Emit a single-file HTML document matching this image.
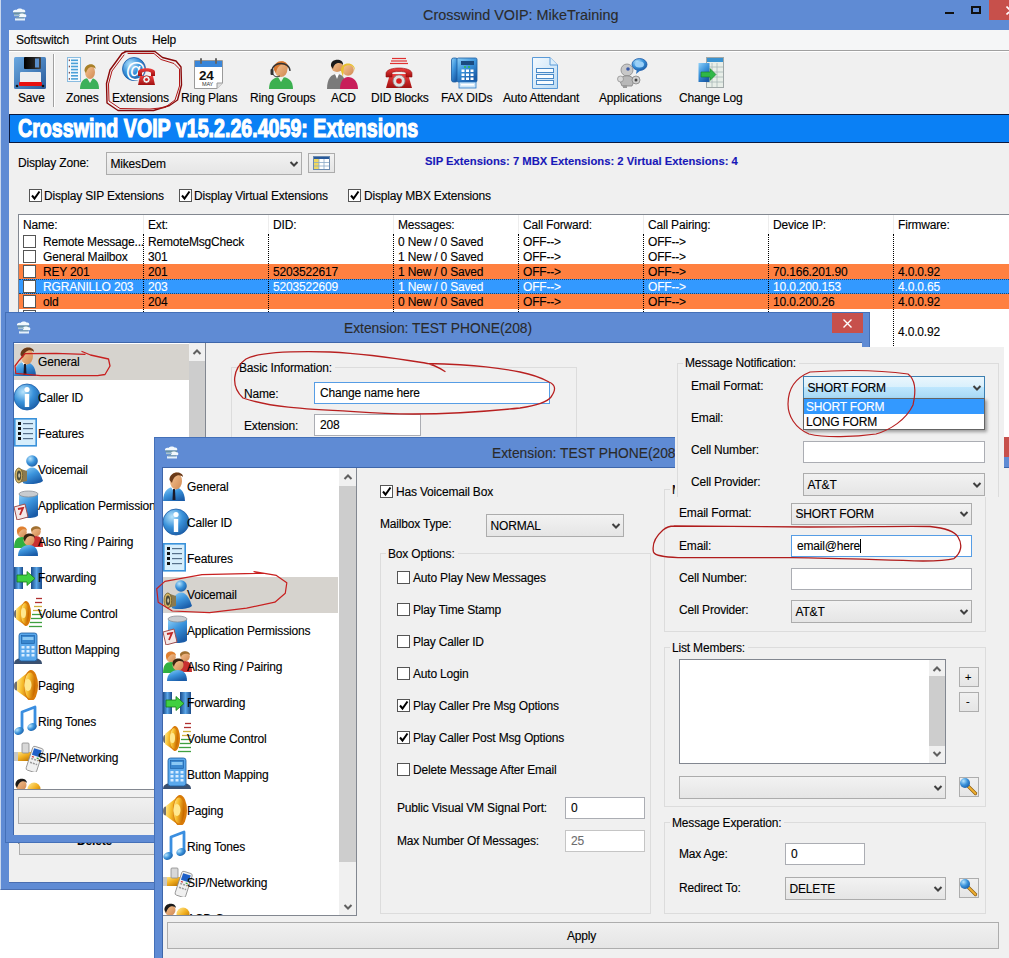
<!DOCTYPE html><html><head><meta charset="utf-8"><style>
*{margin:0;padding:0;box-sizing:border-box}
body{width:1009px;height:958px;position:relative;overflow:hidden;background:#fff;font-family:"Liberation Sans",sans-serif;font-size:12px;color:#000;letter-spacing:-0.18px;-webkit-text-stroke:0.12px currentColor}
.a{position:absolute}
.t{position:absolute;white-space:nowrap;line-height:16px}
.cb{border:1px solid #555;background:#fff}
.win{position:absolute;background:#5F8BD4;border:1px solid #4470B8;overflow:hidden}
.dot{border-left:1px dotted #000}
</style></head><body>

<div class="a" style="left:0;top:0;width:1009px;height:890px;background:#5F8BD4;border-left:1px solid #C8D7EE;border-bottom:1px solid #4A6EB0"></div>
<div class="a" style="left:9px;top:30px;width:1000px;height:853px;background:#F0F0F0;border-bottom:1px solid #4A6EB0"></div>
<div class="a" style="left:9px;top:30px;width:1000px;height:20px;background:#F5F6F7"></div>
<div class="a" style="left:9px;top:50px;width:1000px;height:1px;background:#A0A0A0"></div>
<div class="a" style="left:9px;top:51px;width:1000px;height:1px;background:#FFFFFF"></div>
<div class="t" style="left:16px;top:32.2px;font-size:12px;color:#000;font-weight:normal;">Softswitch</div>
<div class="t" style="left:85px;top:32.2px;font-size:12px;color:#000;font-weight:normal;">Print Outs</div>
<div class="t" style="left:152px;top:32.2px;font-size:12px;color:#000;font-weight:normal;">Help</div>
<div class="t" style="left:423px;top:7.3px;font-size:14.4px;color:#2A2A2A;font-weight:normal;letter-spacing:0">Crosswind VOIP: MikeTraining</div>
<div class="a" style="left:945px;top:12px;width:9px;height:2px;background:#111"></div>
<div class="a" style="left:971px;top:6px;width:10px;height:8px;border:2px solid #111;border-top-width:2px"></div>
<div class="a" style="left:989px;top:0px;width:20px;height:20px;background:#C7504B"></div>
<svg class="a" style="left:1006px;top:6px" width="6" height="9"><path d="M0.5 0.5 L6 6" stroke="#fff" stroke-width="1.6"/><path d="M0.5 8.5 L3 6" stroke="#fff" stroke-width="1.6"/></svg>
<div class="t" style="left:18px;top:90.2px;font-size:12px;color:#000;font-weight:normal;">Save</div>
<div class="t" style="left:66px;top:90.2px;font-size:12px;color:#000;font-weight:normal;">Zones</div>
<div class="t" style="left:112px;top:90.2px;font-size:12px;color:#000;font-weight:normal;">Extensions</div>
<div class="t" style="left:181px;top:90.2px;font-size:12px;color:#000;font-weight:normal;">Ring Plans</div>
<div class="t" style="left:250px;top:90.2px;font-size:12px;color:#000;font-weight:normal;">Ring Groups</div>
<div class="t" style="left:331px;top:90.2px;font-size:12px;color:#000;font-weight:normal;">ACD</div>
<div class="t" style="left:371px;top:90.2px;font-size:12px;color:#000;font-weight:normal;">DID Blocks</div>
<div class="t" style="left:441px;top:90.2px;font-size:12px;color:#000;font-weight:normal;">FAX DIDs</div>
<div class="t" style="left:503px;top:90.2px;font-size:12px;color:#000;font-weight:normal;">Auto Attendant</div>
<div class="t" style="left:599px;top:90.2px;font-size:12px;color:#000;font-weight:normal;">Applications</div>
<div class="t" style="left:679px;top:90.2px;font-size:12px;color:#000;font-weight:normal;">Change Log</div>
<div class="a" style="left:53px;top:54px;width:1px;height:53px;background:#A0A0A0"></div>
<div class="a" style="left:54px;top:54px;width:1px;height:53px;background:#FFFFFF"></div>
<div class="a" style="left:9px;top:114px;width:1000px;height:29px;background:#0A80F5;border:1px solid #0A1A40;border-right:none"></div>
<div class="t" style="left:18px;top:112px;font-size:26px;line-height:32px;font-weight:bold;color:#fff;transform:scaleX(0.755);transform-origin:0 0;letter-spacing:0px;-webkit-text-stroke:1.2px #fff">Crosswind VOIP v15.2.26.4059: Extensions</div>
<div class="t" style="left:18px;top:155.2px;font-size:12px;color:#000;font-weight:normal;">Display Zone:</div>
<div class="a" style="left:106px;top:152px;width:196px;height:23px;border:1px solid #ACACAC;background:linear-gradient(#F2F2F2,#E5E5E5)"></div>
<div class="t" style="left:110.5px;top:155.7px;font-size:12px;color:#000;font-weight:normal;">MikesDem</div>
<svg class="a" style="left:288.5px;top:159.5px" width="10" height="8"><path d="M1.5 2 L5 5.5 L8.5 2" stroke="#404040" stroke-width="2" fill="none"/></svg>
<div class="a" style="left:308px;top:153px;width:27px;height:20px;border:1px solid #ACACAC;background:linear-gradient(#F2F2F2,#E5E5E5)"></div>
<svg class="a" style="left:313px;top:156px" width="17" height="14"><rect x="0.5" y="0.5" width="16" height="13" fill="#fff" stroke="#6A8AB0"/><rect x="1" y="1" width="15" height="2" fill="#2A5A9A"/><rect x="1" y="3" width="5" height="10" fill="#F0D860"/><g stroke="#8AAAC8" stroke-width="0.8"><line x1="6" y1="3" x2="6" y2="13"/><line x1="11" y1="3" x2="11" y2="13"/><line x1="1" y1="6.5" x2="16" y2="6.5"/><line x1="1" y1="10" x2="16" y2="10"/></g></svg>
<div class="t" style="left:425px;top:153.2px;font-size:11.25px;color:#1818B8;font-weight:bold;letter-spacing:0">SIP Extensions: 7 MBX Extensions: 2 Virtual Extensions: 4</div>
<div class="a cb" style="left:29px;top:189px;width:13px;height:13px;"><svg width="11" height="11" style="position:absolute;left:0;top:0"><path d="M2 5.5 L4.5 8.5 L9.5 1.5" stroke="#000" stroke-width="2" fill="none"/></svg></div>
<div class="t" style="left:44px;top:187.7px;font-size:12px;color:#000;font-weight:normal;">Display SIP Extensions</div>
<div class="a cb" style="left:179px;top:189px;width:13px;height:13px;"><svg width="11" height="11" style="position:absolute;left:0;top:0"><path d="M2 5.5 L4.5 8.5 L9.5 1.5" stroke="#000" stroke-width="2" fill="none"/></svg></div>
<div class="t" style="left:194px;top:187.7px;font-size:12px;color:#000;font-weight:normal;">Display Virtual Extensions</div>
<div class="a cb" style="left:348px;top:189px;width:13px;height:13px;"><svg width="11" height="11" style="position:absolute;left:0;top:0"><path d="M2 5.5 L4.5 8.5 L9.5 1.5" stroke="#000" stroke-width="2" fill="none"/></svg></div>
<div class="t" style="left:364px;top:187.7px;font-size:12px;color:#000;font-weight:normal;">Display MBX Extensions</div>
<div class="a" style="left:18px;top:214px;width:991px;height:630px;background:#fff;border-top:1px solid #828790;border-left:1px solid #828790"></div>
<div class="t" style="left:23px;top:217.2px;font-size:12px;color:#000;font-weight:normal;">Name:</div>
<div class="t" style="left:148px;top:217.2px;font-size:12px;color:#000;font-weight:normal;">Ext:</div>
<div class="t" style="left:273px;top:217.2px;font-size:12px;color:#000;font-weight:normal;">DID:</div>
<div class="t" style="left:398px;top:217.2px;font-size:12px;color:#000;font-weight:normal;">Messages:</div>
<div class="t" style="left:523px;top:217.2px;font-size:12px;color:#000;font-weight:normal;">Call Forward:</div>
<div class="t" style="left:648px;top:217.2px;font-size:12px;color:#000;font-weight:normal;">Call Pairing:</div>
<div class="t" style="left:773px;top:217.2px;font-size:12px;color:#000;font-weight:normal;">Device IP:</div>
<div class="t" style="left:898px;top:217.2px;font-size:12px;color:#000;font-weight:normal;">Firmware:</div>
<div class="a" style="left:143px;top:215px;width:1px;height:19px;background:#EDEDED"></div>
<div class="a" style="left:268px;top:215px;width:1px;height:19px;background:#EDEDED"></div>
<div class="a" style="left:393px;top:215px;width:1px;height:19px;background:#EDEDED"></div>
<div class="a" style="left:518px;top:215px;width:1px;height:19px;background:#EDEDED"></div>
<div class="a" style="left:643px;top:215px;width:1px;height:19px;background:#EDEDED"></div>
<div class="a" style="left:768px;top:215px;width:1px;height:19px;background:#EDEDED"></div>
<div class="a" style="left:893px;top:215px;width:1px;height:19px;background:#EDEDED"></div>
<div class="a cb" style="left:23px;top:235px;width:13px;height:13px;"></div>
<div class="t" style="left:43px;top:233.7px;font-size:12px;color:#000;font-weight:normal;">Remote Message...</div>
<div class="t" style="left:148px;top:233.7px;font-size:12px;color:#000;font-weight:normal;">RemoteMsgCheck</div>
<div class="t" style="left:398px;top:233.7px;font-size:12px;color:#000;font-weight:normal;">0 New / 0 Saved</div>
<div class="t" style="left:523px;top:233.7px;font-size:12px;color:#000;font-weight:normal;">OFF--></div>
<div class="t" style="left:648px;top:233.7px;font-size:12px;color:#000;font-weight:normal;">OFF--></div>
<div class="a cb" style="left:23px;top:250px;width:13px;height:13px;"></div>
<div class="t" style="left:43px;top:248.7px;font-size:12px;color:#000;font-weight:normal;">General Mailbox</div>
<div class="t" style="left:148px;top:248.7px;font-size:12px;color:#000;font-weight:normal;">301</div>
<div class="t" style="left:398px;top:248.7px;font-size:12px;color:#000;font-weight:normal;">1 New / 0 Saved</div>
<div class="t" style="left:523px;top:248.7px;font-size:12px;color:#000;font-weight:normal;">OFF--></div>
<div class="t" style="left:648px;top:248.7px;font-size:12px;color:#000;font-weight:normal;">OFF--></div>
<div class="a" style="left:19px;top:264px;width:990px;height:15px;background:#FF8040"></div>
<div class="a cb" style="left:23px;top:265px;width:13px;height:13px;"></div>
<div class="t" style="left:43px;top:263.7px;font-size:12px;color:#000;font-weight:normal;">REY 201</div>
<div class="t" style="left:148px;top:263.7px;font-size:12px;color:#000;font-weight:normal;">201</div>
<div class="t" style="left:273px;top:263.7px;font-size:12px;color:#000;font-weight:normal;">5203522617</div>
<div class="t" style="left:398px;top:263.7px;font-size:12px;color:#000;font-weight:normal;">1 New / 0 Saved</div>
<div class="t" style="left:523px;top:263.7px;font-size:12px;color:#000;font-weight:normal;">OFF--></div>
<div class="t" style="left:648px;top:263.7px;font-size:12px;color:#000;font-weight:normal;">OFF--></div>
<div class="t" style="left:773px;top:263.7px;font-size:12px;color:#000;font-weight:normal;">70.166.201.90</div>
<div class="t" style="left:898px;top:263.7px;font-size:12px;color:#000;font-weight:normal;">4.0.0.92</div>
<div class="a" style="left:19px;top:279px;width:990px;height:15px;background:#3399FF;border-top:1px dotted rgba(0,0,0,0.55);border-bottom:1px dotted rgba(0,0,0,0.55)"></div>
<div class="a cb" style="left:23px;top:280px;width:13px;height:13px;"></div>
<div class="t" style="left:43px;top:278.7px;font-size:12px;color:#fff;font-weight:normal;">RGRANILLO 203</div>
<div class="t" style="left:148px;top:278.7px;font-size:12px;color:#fff;font-weight:normal;">203</div>
<div class="t" style="left:273px;top:278.7px;font-size:12px;color:#fff;font-weight:normal;">5203522609</div>
<div class="t" style="left:398px;top:278.7px;font-size:12px;color:#fff;font-weight:normal;">1 New / 0 Saved</div>
<div class="t" style="left:523px;top:278.7px;font-size:12px;color:#fff;font-weight:normal;">OFF--></div>
<div class="t" style="left:648px;top:278.7px;font-size:12px;color:#fff;font-weight:normal;">OFF--></div>
<div class="t" style="left:773px;top:278.7px;font-size:12px;color:#fff;font-weight:normal;">10.0.200.153</div>
<div class="t" style="left:898px;top:278.7px;font-size:12px;color:#fff;font-weight:normal;">4.0.0.65</div>
<div class="a" style="left:19px;top:294px;width:990px;height:15px;background:#FF8040"></div>
<div class="a cb" style="left:23px;top:295px;width:13px;height:13px;"></div>
<div class="t" style="left:43px;top:293.7px;font-size:12px;color:#000;font-weight:normal;">old</div>
<div class="t" style="left:148px;top:293.7px;font-size:12px;color:#000;font-weight:normal;">204</div>
<div class="t" style="left:398px;top:293.7px;font-size:12px;color:#000;font-weight:normal;">0 New / 0 Saved</div>
<div class="t" style="left:523px;top:293.7px;font-size:12px;color:#000;font-weight:normal;">OFF--></div>
<div class="t" style="left:648px;top:293.7px;font-size:12px;color:#000;font-weight:normal;">OFF--></div>
<div class="t" style="left:773px;top:293.7px;font-size:12px;color:#000;font-weight:normal;">10.0.200.26</div>
<div class="t" style="left:898px;top:293.7px;font-size:12px;color:#000;font-weight:normal;">4.0.0.92</div>
<div class="a cb" style="left:23px;top:310px;width:13px;height:13px;"></div>
<div class="a cb" style="left:23px;top:325px;width:13px;height:13px;"></div>
<div class="t" style="left:898px;top:323.7px;font-size:12px;color:#000;font-weight:normal;">4.0.0.92</div>
<div class="a" style="left:143px;top:234px;width:1px;height:600px;border-left:1px dotted #000"></div>
<div class="a" style="left:268px;top:234px;width:1px;height:600px;border-left:1px dotted #000"></div>
<div class="a" style="left:393px;top:234px;width:1px;height:600px;border-left:1px dotted #000"></div>
<div class="a" style="left:518px;top:234px;width:1px;height:600px;border-left:1px dotted #000"></div>
<div class="a" style="left:643px;top:234px;width:1px;height:600px;border-left:1px dotted #000"></div>
<div class="a" style="left:768px;top:234px;width:1px;height:600px;border-left:1px dotted #000"></div>
<div class="a" style="left:893px;top:234px;width:1px;height:600px;border-left:1px dotted #000"></div>
<div class="a" style="left:19px;top:830px;width:990px;height:25px;border:1px solid #ADADAD;background:linear-gradient(#F0F0F0,#E5E5E5)"></div>
<div class="t" style="left:77px;top:832.7px;font-size:12px;color:#000;font-weight:bold;">Delete</div>
<svg width="0" height="0" style="position:absolute">
<defs>
<linearGradient id="gBlue" x1="0" y1="0" x2="0.6" y2="1"><stop offset="0" stop-color="#8FD0F8"/><stop offset="0.5" stop-color="#3C94DC"/><stop offset="1" stop-color="#1A5CA8"/></linearGradient>
<radialGradient id="gBall" cx="0.35" cy="0.3" r="0.8"><stop offset="0" stop-color="#B8E4FC"/><stop offset="0.5" stop-color="#3A92DA"/><stop offset="1" stop-color="#1858A0"/></radialGradient>
<linearGradient id="gGold" x1="0" y1="0" x2="1" y2="1"><stop offset="0" stop-color="#FFF0A0"/><stop offset="0.5" stop-color="#F2B020"/><stop offset="1" stop-color="#B06800"/></linearGradient>
<linearGradient id="gHorn" x1="0" y1="0" x2="1" y2="0.3"><stop offset="0" stop-color="#FFF0A0"/><stop offset="0.45" stop-color="#F8C030"/><stop offset="1" stop-color="#C86A00"/></linearGradient><linearGradient id="gSkin" x1="0" y1="0" x2="1" y2="1"><stop offset="0" stop-color="#F8C898"/><stop offset="1" stop-color="#D08850"/></linearGradient>
<linearGradient id="gBar" x1="0" y1="0" x2="1" y2="0"><stop offset="0" stop-color="#1A4A88"/><stop offset="0.5" stop-color="#5AA6E8"/><stop offset="1" stop-color="#1A4A88"/></linearGradient>
<linearGradient id="gRed" x1="0" y1="0" x2="0" y2="1"><stop offset="0" stop-color="#F04040"/><stop offset="1" stop-color="#A01010"/></linearGradient>
<symbol id="i-general" viewBox="0 0 32 32"><path d="M0 33 C0 22 5 18 11 18 C17 18 22 22 22 33Z" fill="url(#gBlue)"/><path d="M8 18 L11 23 L14 18Z" fill="#fff"/><path d="M10 20 L9.5 31 L12.5 31 L12 20Z" fill="#1A1A2A"/><ellipse cx="13" cy="12" rx="6" ry="8.5" fill="url(#gSkin)"/><path d="M6.5 11 C6 2 20 1 20 8 C17 5 11 5 9 14Z" fill="#6A3A18"/></symbol>
<symbol id="i-callerid" viewBox="0 0 32 32"><circle cx="13" cy="17" r="13" fill="url(#gBall)" stroke="#1A5CA8" stroke-width="0.8"/><circle cx="13" cy="9.5" r="2.6" fill="#fff"/><rect x="10.8" y="14" width="4.4" height="13" fill="#fff"/></symbol>
<symbol id="i-features" viewBox="0 0 32 32"><rect x="0.8" y="2.8" width="21.4" height="27" fill="#D6EEFC" stroke="#3A92DA" stroke-width="1.6"/><g fill="#111"><rect x="4" y="6" width="3" height="3"/><rect x="4" y="11" width="3" height="3"/><rect x="4" y="16" width="3" height="3"/><rect x="4" y="21" width="3" height="3"/></g><g fill="#55708A"><rect x="9" y="7" width="10" height="1.2"/><rect x="9" y="12" width="10" height="1.2"/><rect x="9" y="17" width="10" height="1.2"/><rect x="9" y="22" width="10" height="1.2"/></g></symbol>
<symbol id="i-voicemail" viewBox="0 0 32 32"><path d="M9 31 C8 24 12 15.5 18 15.5 C24 15.5 27 23 29 29 C26 32 13 33 9 31Z" fill="url(#gBlue)"/><circle cx="18" cy="9" r="5.8" fill="url(#gBall)"/><path d="M4 16 L13 19 L13 29 L4 31Z" fill="#8A7A50"/><ellipse cx="4.8" cy="23.5" rx="3.8" ry="7.5" fill="#D8B868" stroke="#6A5A28" stroke-width="0.8"/><ellipse cx="5" cy="23.5" rx="2.2" ry="5" fill="#4A4A3A"/><ellipse cx="5.2" cy="23.5" rx="1" ry="2.2" fill="#C8C0A0"/></symbol>
<symbol id="i-app" viewBox="0 0 32 32"><path d="M5 6 L5 27 C5 31 24 31 24 27 L24 6Z" fill="url(#gBlue)"/><ellipse cx="14.5" cy="6" rx="9.5" ry="3" fill="#C8CCD0" stroke="#8A9098" stroke-width="0.8"/><path d="M0 19 L11 16 L14 29 L3 32Z" fill="#F4E8E8" stroke="#A05050" stroke-width="1"/><path d="M4 21 L9 20 L6 27" stroke="#C02828" stroke-width="1.8" fill="none"/></symbol>
<symbol id="i-alsoring" viewBox="0 0 32 32"><circle cx="22" cy="7.5" r="4.8" fill="url(#gSkin)"/><path d="M17 6 C17 1 27 1 27 6 C25 4 19 4 18 8Z" fill="#A07030"/><path d="M15 23 C15 15 18 12 22 12 C26 12 29 15 29 23Z" fill="#C83030"/><circle cx="8" cy="8.5" r="4.8" fill="url(#gSkin)"/><path d="M3 8 C2 1 13 1 13 7 C11 4 6 5 4 11Z" fill="#E08030"/><path d="M0 24 C0 16 3 13 8 13 C12 13 15 16 15 24Z" fill="#30B040"/><circle cx="15" cy="16" r="5.5" fill="url(#gSkin)"/><path d="M9.5 15 C9 8 21 8 21 14 C19 11 12 11 11 18Z" fill="#3A2410"/><path d="M4 32 C4 25 9 21 15 21 C21 21 24 25 24 32Z" fill="url(#gBlue)"/></symbol>
<symbol id="i-forward" viewBox="0 0 32 32"><rect x="0" y="7" width="9" height="22" fill="url(#gBar)"/><rect x="17" y="7" width="11" height="22" fill="url(#gBar)"/><path d="M3 15 L13 15 L13 11.5 L21 18.5 L13 25.5 L13 22 L3 22Z" fill="#40D040" stroke="#187818" stroke-width="0.8"/></symbol>
<symbol id="i-volume" viewBox="0 0 32 32"><ellipse cx="2" cy="18" rx="2" ry="4" fill="#707070"/><path d="M2 13 L12 5 L12 30 L2 23Z" fill="url(#gHorn)"/><ellipse cx="12" cy="17.5" rx="5" ry="12.5" fill="#D87A08"/><ellipse cx="11" cy="17.5" rx="4" ry="10.5" fill="url(#gHorn)"/><ellipse cx="9.5" cy="17" rx="2.5" ry="5" fill="#FFE890"/><g stroke-width="1.3"><line x1="22" y1="2.5" x2="28" y2="2.5" stroke="#B03030"/><line x1="21" y1="6.5" x2="28" y2="6.5" stroke="#B03030"/><line x1="20" y1="10.5" x2="28" y2="10.5" stroke="#D0B040"/><line x1="19" y1="14.5" x2="28" y2="14.5" stroke="#D0B040"/><line x1="18" y1="18.5" x2="28" y2="18.5" stroke="#40A040"/><line x1="17" y1="22.5" x2="28" y2="22.5" stroke="#40A040"/><line x1="16" y1="26.5" x2="28" y2="26.5" stroke="#40A040"/><line x1="15" y1="30.5" x2="28" y2="30.5" stroke="#40A040"/></g></symbol>
<symbol id="i-button" viewBox="0 0 32 32"><path d="M0 32 C0 28 3 27 6 26 L22 26 C25 27 28 28 28 32Z" fill="#3A5070"/><rect x="5" y="1" width="18" height="28" rx="2.5" fill="#5AA8EC" stroke="#1A5AA0" stroke-width="0.8"/><rect x="7.5" y="3.5" width="13" height="8" fill="#3A88D0" stroke="#1A5AA0" stroke-width="0.6"/><rect x="8.5" y="5" width="11" height="3" fill="#8AC8F4"/><g fill="#D8ECFF"><rect x="7.5" y="14" width="3" height="2.5"/><rect x="12.5" y="14" width="3" height="2.5"/><rect x="17.5" y="14" width="3" height="2.5"/><rect x="7.5" y="18" width="3" height="2.5"/><rect x="12.5" y="18" width="3" height="2.5"/><rect x="17.5" y="18" width="3" height="2.5"/><rect x="7.5" y="22" width="3" height="2.5"/><rect x="12.5" y="22" width="3" height="2.5"/><rect x="17.5" y="22" width="3" height="2.5"/></g></symbol>
<symbol id="i-paging" viewBox="0 0 32 32"><ellipse cx="3" cy="18" rx="3" ry="4.5" fill="#707070"/><path d="M3 13 L17 2 L17 33 L3 23Z" fill="url(#gHorn)"/><ellipse cx="17" cy="17.5" rx="7" ry="15.5" fill="#D87A08"/><ellipse cx="16" cy="17.5" rx="5.5" ry="13" fill="url(#gHorn)"/><ellipse cx="14" cy="17" rx="3.5" ry="6" fill="#FFE890"/></symbol>
<symbol id="i-ring" viewBox="0 0 32 32"><path d="M8 27 L8 8 L21 3 L21 23" stroke="#3A8EE0" stroke-width="2.8" fill="none" stroke-linejoin="round"/><ellipse cx="5" cy="27" rx="4.8" ry="3.8" fill="url(#gBall)" transform="rotate(-20 5 27)"/><ellipse cx="18" cy="23" rx="4.8" ry="3.8" fill="url(#gBall)" transform="rotate(-20 18 23)"/></symbol>
<symbol id="i-sip" viewBox="0 0 32 32"><rect x="0" y="12" width="18" height="9" rx="1" fill="url(#gGold)"/><rect x="0" y="12" width="4" height="9" fill="#C8C8C8"/><rect x="8" y="3" width="7" height="10" rx="1" fill="#D8D8D8" stroke="#8A8A8A" stroke-width="0.8"/><g transform="rotate(18 21 20)"><rect x="15" y="7" width="11" height="25" rx="2" fill="#F0F0F0" stroke="#8A8A8A" stroke-width="0.8"/><rect x="16.5" y="9" width="8" height="7" fill="#1E60C8"/><g fill="#999"><rect x="17" y="19" width="2" height="1.5"/><rect x="20" y="19" width="2" height="1.5"/><rect x="23" y="19" width="1.5" height="1.5"/><rect x="17" y="23" width="2" height="1.5"/><rect x="20" y="23" width="2" height="1.5"/><rect x="23" y="23" width="1.5" height="1.5"/></g><rect x="17" y="17" width="2" height="1.2" fill="#D03030"/><rect x="22" y="17" width="2" height="1.2" fill="#30A030"/></g></symbol>
<symbol id="i-acd" viewBox="0 0 32 32"><circle cx="7" cy="9" r="5.5" fill="url(#gSkin)"/><path d="M1.5 9 C1 1 13 1 13 7 C11 4 5 4 3 12Z" fill="#1A1A1A"/><circle cx="20" cy="13" r="6.5" fill="url(#gGold)"/></symbol>
<symbol id="i-acd2" viewBox="0 0 32 32"><circle cx="10" cy="9" r="6" fill="url(#gSkin)"/><path d="M4 9 C3 1 17 1 16 8 C14 5 7 5 6 12Z" fill="#1A1A1A"/><path d="M0 32 C0 22 4 17 10 17 C16 17 19 22 19 32Z" fill="#7A7A7A"/><path d="M8 17 L10 22 L12 17Z" fill="#fff"/><circle cx="21" cy="13" r="5.8" fill="url(#gSkin)"/><path d="M14 14 C13 4 29 4 28 14 C27 8 21 7 17 10 L16 20Z" fill="#E8C030"/><path d="M13 32 C13 24 17 20 21 20 C26 20 31 24 31 32Z" fill="#C81E5A"/></symbol>
<symbol id="wicon" viewBox="0 0 15 13"><path d="M1 4.5 C0.5 2.5 2.5 1.5 4.5 2 C5.5 0 9.5 0 10.5 1.5 C12.5 1 14 2.5 13 4.5Z" fill="#F2F8FC"/><path d="M1 4.5 L13.5 4.5 L12.5 6.2 L2 6.2Z" fill="#6A92A0"/><path d="M7 6.5 C8 5.2 11.5 5 12.5 6.2 C14.5 6.2 15 8.5 13.5 9.2 L7 9.2Z" fill="#F2F8FC"/><path d="M2 6.5 L8 6.5 L8 8.2 L2 8.2Z" fill="#A8C4D0"/><rect x="3" y="10.3" width="10" height="2.2" fill="#E4F0FA"/><rect x="4" y="9.2" width="8" height="1.1" fill="#7A9EAE"/></symbol>
</defs></svg>
<div class="win" style="left:5px;top:312px;width:865px;height:531px">
</div>
<div class="a" style="left:13px;top:342px;width:849px;height:493px;background:#F0F0F0;border-top:1px solid #3E66AA;border-left:1px solid #3E66AA"></div>
<div class="a" style="left:14px;top:343px;width:192px;height:447px;background:#fff;border-right:1px solid #828790;border-bottom:1px solid #828790;overflow:hidden">
<div class="a" style="left:0;top:1px;width:175px;height:36px;background:#D6D3CE"></div>
<svg class="a" style="left:0;top:1px" width="32" height="32"><use href="#i-general"/></svg>
<div class="t" style="left:24px;top:11.2px">General</div>
<svg class="a" style="left:0;top:37px" width="32" height="32"><use href="#i-callerid"/></svg>
<div class="t" style="left:24px;top:47.2px">Caller ID</div>
<svg class="a" style="left:0;top:73px" width="32" height="32"><use href="#i-features"/></svg>
<div class="t" style="left:24px;top:83.2px">Features</div>
<svg class="a" style="left:0;top:109px" width="32" height="32"><use href="#i-voicemail"/></svg>
<div class="t" style="left:24px;top:119.2px">Voicemail</div>
<svg class="a" style="left:0;top:145px" width="32" height="32"><use href="#i-app"/></svg>
<div class="t" style="left:24px;top:155.2px">Application Permissions</div>
<svg class="a" style="left:0;top:181px" width="32" height="32"><use href="#i-alsoring"/></svg>
<div class="t" style="left:24px;top:191.2px">Also Ring / Pairing</div>
<svg class="a" style="left:0;top:217px" width="32" height="32"><use href="#i-forward"/></svg>
<div class="t" style="left:24px;top:227.2px">Forwarding</div>
<svg class="a" style="left:0;top:253px" width="32" height="32"><use href="#i-volume"/></svg>
<div class="t" style="left:24px;top:263.2px">Volume Control</div>
<svg class="a" style="left:0;top:289px" width="32" height="32"><use href="#i-button"/></svg>
<div class="t" style="left:24px;top:299.2px">Button Mapping</div>
<svg class="a" style="left:0;top:325px" width="32" height="32"><use href="#i-paging"/></svg>
<div class="t" style="left:24px;top:335.2px">Paging</div>
<svg class="a" style="left:0;top:361px" width="32" height="32"><use href="#i-ring"/></svg>
<div class="t" style="left:24px;top:371.2px">Ring Tones</div>
<svg class="a" style="left:0;top:397px" width="32" height="32"><use href="#i-sip"/></svg>
<div class="t" style="left:24px;top:407.2px">SIP/Networking</div>
<svg class="a" style="left:0;top:433px" width="32" height="32"><use href="#i-acd"/></svg>
<div class="t" style="left:24px;top:443.2px">ACD Group</div>
<div class="a" style="left:175px;top:0;width:16px;height:447px;background:#F0F0F0"></div>
<div class="a" style="left:175px;top:18px;width:16px;height:429px;background:#CDCDCD"></div>
<svg class="a" style="left:178px;top:5px" width="10" height="8"><path d="M1.5 6 L5 2.5 L8.5 6" stroke="#606060" stroke-width="2" fill="none"/></svg>
</div>
<div class="a" style="left:18px;top:797px;width:844px;height:27px;border:1px solid #ADADAD;background:linear-gradient(#F0F0F0,#E5E5E5)"></div>
<svg class="a" style="left:16px;top:321px" width="15" height="13"><use href="#wicon"/></svg>
<div class="t" style="left:344px;top:320.7px;font-size:13.8px;color:#2A2A2A;font-weight:normal;letter-spacing:0">Extension: TEST PHONE(208)</div>
<div class="a" style="left:832px;top:313px;width:31px;height:20px;background:#C7504B"></div>
<svg class="a" style="left:842px;top:318px" width="11" height="11"><path d="M1.5 1.5 L9.5 9.5 M9.5 1.5 L1.5 9.5" stroke="#fff" stroke-width="1.4"/></svg>
<div class="a" style="left:231px;top:367px;width:346px;height:120px;border:1px solid #DCDCDC;"></div>
<div class="t" style="left:237px;top:359.7px;padding:0 3px 0 2px;background:#F0F0F0;line-height:16px">Basic Information:</div>
<div class="t" style="left:244px;top:385.7px;font-size:12px;color:#000;font-weight:normal;">Name:</div>
<div class="a" style="left:314px;top:382px;width:236px;height:22px;border:1px solid #569DE5;background:#fff"></div>
<div class="t" style="left:320px;top:385.2px;font-size:12px;color:#000;font-weight:normal;">Change name here</div>
<div class="t" style="left:244px;top:417.7px;font-size:12px;color:#000;font-weight:normal;">Extension:</div>
<div class="a" style="left:314px;top:414px;width:107px;height:22px;border:1px solid #ABADB3;background:#fff"></div>
<div class="t" style="left:320px;top:417.2px;font-size:12px;color:#000;font-weight:normal;">208</div>
<div class="win" style="left:154px;top:437px;width:870px;height:540px"></div>
<div class="a" style="left:162px;top:467px;width:847px;height:491px;background:#F0F0F0;border-top:1px solid #3E66AA;border-left:1px solid #3E66AA"></div>
<svg class="a" style="left:164px;top:446px" width="15" height="13"><use href="#wicon"/></svg>
<div class="t" style="left:492px;top:445.7px;font-size:13.8px;color:#2A2A2A;font-weight:normal;letter-spacing:0">Extension: TEST PHONE(208)</div>
<div class="a" style="left:1003px;top:437px;width:6px;height:20px;background:#C7504B"></div>
<div class="a" style="left:163px;top:468px;width:194px;height:448px;background:#fff;border-right:1px solid #828790;border-bottom:1px solid #828790;overflow:hidden">
<div class="a" style="left:0;top:109px;width:175px;height:36px;background:#D6D3CE"></div>
<svg class="a" style="left:0;top:1px" width="32" height="32"><use href="#i-general"/></svg>
<div class="t" style="left:24px;top:11.2px">General</div>
<svg class="a" style="left:0;top:37px" width="32" height="32"><use href="#i-callerid"/></svg>
<div class="t" style="left:24px;top:47.2px">Caller ID</div>
<svg class="a" style="left:0;top:73px" width="32" height="32"><use href="#i-features"/></svg>
<div class="t" style="left:24px;top:83.2px">Features</div>
<svg class="a" style="left:0;top:109px" width="32" height="32"><use href="#i-voicemail"/></svg>
<div class="t" style="left:24px;top:119.2px">Voicemail</div>
<svg class="a" style="left:0;top:145px" width="32" height="32"><use href="#i-app"/></svg>
<div class="t" style="left:24px;top:155.2px">Application Permissions</div>
<svg class="a" style="left:0;top:181px" width="32" height="32"><use href="#i-alsoring"/></svg>
<div class="t" style="left:24px;top:191.2px">Also Ring / Pairing</div>
<svg class="a" style="left:0;top:217px" width="32" height="32"><use href="#i-forward"/></svg>
<div class="t" style="left:24px;top:227.2px">Forwarding</div>
<svg class="a" style="left:0;top:253px" width="32" height="32"><use href="#i-volume"/></svg>
<div class="t" style="left:24px;top:263.2px">Volume Control</div>
<svg class="a" style="left:0;top:289px" width="32" height="32"><use href="#i-button"/></svg>
<div class="t" style="left:24px;top:299.2px">Button Mapping</div>
<svg class="a" style="left:0;top:325px" width="32" height="32"><use href="#i-paging"/></svg>
<div class="t" style="left:24px;top:335.2px">Paging</div>
<svg class="a" style="left:0;top:361px" width="32" height="32"><use href="#i-ring"/></svg>
<div class="t" style="left:24px;top:371.2px">Ring Tones</div>
<svg class="a" style="left:0;top:397px" width="32" height="32"><use href="#i-sip"/></svg>
<div class="t" style="left:24px;top:407.2px">SIP/Networking</div>
<svg class="a" style="left:0;top:433px" width="32" height="32"><use href="#i-acd"/></svg>
<div class="t" style="left:24px;top:443.2px">ACD Group</div>
<div class="a" style="left:176px;top:0;width:17px;height:447px;background:#F0F0F0"></div>
<div class="a" style="left:176px;top:18px;width:17px;height:376px;background:#CDCDCD"></div>
<svg class="a" style="left:180px;top:5px" width="10" height="8"><path d="M1.5 6 L5 2.5 L8.5 6" stroke="#606060" stroke-width="2" fill="none"/></svg>
<svg class="a" style="left:180px;top:435px" width="10" height="8"><path d="M1.5 2 L5 5.5 L8.5 2" stroke="#606060" stroke-width="2" fill="none"/></svg>
</div>
<div class="a cb" style="left:380px;top:485px;width:13px;height:13px;"><svg width="11" height="11" style="position:absolute;left:0;top:0"><path d="M2 5.5 L4.5 8.5 L9.5 1.5" stroke="#000" stroke-width="2" fill="none"/></svg></div>
<div class="t" style="left:396px;top:483.7px;font-size:12px;color:#000;font-weight:normal;">Has Voicemail Box</div>
<div class="t" style="left:380px;top:516.2px;font-size:12px;color:#000;font-weight:normal;">Mailbox Type:</div>
<div class="a" style="left:486px;top:514px;width:138px;height:23px;border:1px solid #ACACAC;background:linear-gradient(#F2F2F2,#E5E5E5)"></div>
<div class="t" style="left:490.5px;top:517.7px;font-size:12px;color:#000;font-weight:normal;">NORMAL</div>
<svg class="a" style="left:610.5px;top:521.5px" width="10" height="8"><path d="M1.5 2 L5 5.5 L8.5 2" stroke="#404040" stroke-width="2" fill="none"/></svg>
<div class="a" style="left:380px;top:553px;width:271px;height:361px;border:1px solid #DCDCDC;"></div>
<div class="t" style="left:386px;top:545.7px;padding:0 3px 0 2px;background:#F0F0F0;line-height:16px">Box Options:</div>
<div class="a cb" style="left:397px;top:571px;width:13px;height:13px;"></div>
<div class="t" style="left:413px;top:569.7px;font-size:12px;color:#000;font-weight:normal;">Auto Play New Messages</div>
<div class="a cb" style="left:397px;top:603px;width:13px;height:13px;"></div>
<div class="t" style="left:413px;top:601.7px;font-size:12px;color:#000;font-weight:normal;">Play Time Stamp</div>
<div class="a cb" style="left:397px;top:635px;width:13px;height:13px;"></div>
<div class="t" style="left:413px;top:633.7px;font-size:12px;color:#000;font-weight:normal;">Play Caller ID</div>
<div class="a cb" style="left:397px;top:667px;width:13px;height:13px;"></div>
<div class="t" style="left:413px;top:665.7px;font-size:12px;color:#000;font-weight:normal;">Auto Login</div>
<div class="a cb" style="left:397px;top:699px;width:13px;height:13px;"><svg width="11" height="11" style="position:absolute;left:0;top:0"><path d="M2 5.5 L4.5 8.5 L9.5 1.5" stroke="#000" stroke-width="2" fill="none"/></svg></div>
<div class="t" style="left:413px;top:697.7px;font-size:12px;color:#000;font-weight:normal;">Play Caller Pre Msg Options</div>
<div class="a cb" style="left:397px;top:731px;width:13px;height:13px;"><svg width="11" height="11" style="position:absolute;left:0;top:0"><path d="M2 5.5 L4.5 8.5 L9.5 1.5" stroke="#000" stroke-width="2" fill="none"/></svg></div>
<div class="t" style="left:413px;top:729.7px;font-size:12px;color:#000;font-weight:normal;">Play Caller Post Msg Options</div>
<div class="a cb" style="left:397px;top:763px;width:13px;height:13px;"></div>
<div class="t" style="left:413px;top:761.7px;font-size:12px;color:#000;font-weight:normal;">Delete Message After Email</div>
<div class="t" style="left:397px;top:800.2px;font-size:12px;color:#000;font-weight:normal;">Public Visual VM Signal Port:</div>
<div class="a" style="left:565px;top:797px;width:80px;height:22px;border:1px solid #ABADB3;background:#fff"></div>
<div class="t" style="left:571px;top:800.2px;font-size:12px;color:#000;font-weight:normal;">0</div>
<div class="t" style="left:397px;top:832.7px;font-size:12px;color:#000;font-weight:normal;">Max Number Of Messages:</div>
<div class="a" style="left:565px;top:830px;width:80px;height:22px;border:1px solid #C5C5C5;background:#fff"></div>
<div class="t" style="left:571px;top:833.2px;font-size:12px;color:#6D6D6D;font-weight:normal;">25</div>
<div class="a" style="left:664px;top:489px;width:322px;height:143px;border:1px solid #DCDCDC;"></div>
<div class="t" style="left:670px;top:481.7px;padding:0 3px 0 2px;background:#F0F0F0;line-height:16px">Message Notification:</div>
<div class="t" style="left:679px;top:505.2px;font-size:12px;color:#000;font-weight:normal;">Email Format:</div>
<div class="a" style="left:791px;top:503px;width:181px;height:22px;border:1px solid #ACACAC;background:linear-gradient(#F2F2F2,#E5E5E5)"></div>
<div class="t" style="left:795.5px;top:506.2px;font-size:12px;color:#000;font-weight:normal;">SHORT FORM</div>
<svg class="a" style="left:958.5px;top:510.0px" width="10" height="8"><path d="M1.5 2 L5 5.5 L8.5 2" stroke="#404040" stroke-width="2" fill="none"/></svg>
<div class="t" style="left:679px;top:537.7px;font-size:12px;color:#000;font-weight:normal;">Email:</div>
<div class="a" style="left:791px;top:535px;width:181px;height:22px;border:1px solid #569DE5;background:#fff"></div>
<div class="t" style="left:797px;top:538.2px;font-size:12px;color:#000;font-weight:normal;">email@here</div>
<div class="a" style="left:860px;top:539px;width:1px;height:14px;background:#000"></div>
<div class="t" style="left:679px;top:569.7px;font-size:12px;color:#000;font-weight:normal;">Cell Number:</div>
<div class="a" style="left:791px;top:568px;width:181px;height:22px;border:1px solid #ABADB3;background:#fff"></div>
<div class="t" style="left:679px;top:601.7px;font-size:12px;color:#000;font-weight:normal;">Cell Provider:</div>
<div class="a" style="left:791px;top:600px;width:181px;height:23px;border:1px solid #ACACAC;background:linear-gradient(#F2F2F2,#E5E5E5)"></div>
<div class="t" style="left:795.5px;top:603.7px;font-size:12px;color:#000;font-weight:normal;">AT&amp;T</div>
<svg class="a" style="left:958.5px;top:607.5px" width="10" height="8"><path d="M1.5 2 L5 5.5 L8.5 2" stroke="#404040" stroke-width="2" fill="none"/></svg>
<div class="a" style="left:664px;top:647px;width:322px;height:160px;border:1px solid #DCDCDC;"></div>
<div class="t" style="left:670px;top:639.7px;padding:0 3px 0 2px;background:#F0F0F0;line-height:16px">List Members:</div>
<div class="a" style="left:679px;top:659px;width:267px;height:105px;border:1px solid #828790;background:#fff"></div>
<div class="a" style="left:929px;top:660px;width:16px;height:103px;background:#F0F0F0"></div>
<div class="a" style="left:929px;top:676px;width:16px;height:70px;background:#CDCDCD"></div>
<svg class="a" style="left:932px;top:665px" width="10" height="8"><path d="M1.5 6 L5 2.5 L8.5 6" stroke="#606060" stroke-width="2" fill="none"/></svg>
<svg class="a" style="left:932px;top:750px" width="10" height="8"><path d="M1.5 2 L5 5.5 L8.5 2" stroke="#606060" stroke-width="2" fill="none"/></svg>
<div class="a" style="left:959px;top:667px;width:20px;height:20px;border:1px solid #ADADAD;background:linear-gradient(#F0F0F0,#E5E5E5)"></div>
<div class="t" style="left:965px;top:669.2px;font-size:11px;color:#000;font-weight:normal;">+</div>
<div class="a" style="left:959px;top:692px;width:20px;height:20px;border:1px solid #ADADAD;background:linear-gradient(#F0F0F0,#E5E5E5)"></div>
<div class="t" style="left:966px;top:693.2px;font-size:11px;color:#000;font-weight:normal;">-</div>
<div class="a" style="left:679px;top:776px;width:267px;height:23px;border:1px solid #ACACAC;background:linear-gradient(#F2F2F2,#E5E5E5)"></div>
<svg class="a" style="left:932.5px;top:783.5px" width="10" height="8"><path d="M1.5 2 L5 5.5 L8.5 2" stroke="#404040" stroke-width="2" fill="none"/></svg>
<div class="a" style="left:959px;top:777px;width:20px;height:20px;border:1px solid #ADADAD;background:linear-gradient(#F0F0F0,#E5E5E5)"></div>
<svg class="a" style="left:960px;top:778px" width="18" height="18"><line x1="7" y1="7" x2="15.5" y2="15.5" stroke="#8A5A10" stroke-width="3.2" stroke-linecap="round"/><line x1="7" y1="7" x2="15.5" y2="15.5" stroke="#F0B030" stroke-width="1.8" stroke-linecap="round"/><path d="M1 1 L7 1 A6 6 0 0 1 1 7Z" fill="#fff"/><circle cx="5" cy="5" r="5" fill="url(#gBall)"/></svg>
<div class="a" style="left:664px;top:822px;width:322px;height:92px;border:1px solid #DCDCDC;"></div>
<div class="t" style="left:670px;top:814.7px;padding:0 3px 0 2px;background:#F0F0F0;line-height:16px">Message Experation:</div>
<div class="t" style="left:679px;top:845.7px;font-size:12px;color:#000;font-weight:normal;">Max Age:</div>
<div class="a" style="left:785px;top:843px;width:80px;height:22px;border:1px solid #ABADB3;background:#fff"></div>
<div class="t" style="left:791px;top:846.2px;font-size:12px;color:#000;font-weight:normal;">0</div>
<div class="t" style="left:679px;top:879.7px;font-size:12px;color:#000;font-weight:normal;">Redirect To:</div>
<div class="a" style="left:785px;top:877px;width:161px;height:23px;border:1px solid #ACACAC;background:linear-gradient(#F2F2F2,#E5E5E5)"></div>
<div class="t" style="left:789.5px;top:880.7px;font-size:12px;color:#000;font-weight:normal;">DELETE</div>
<svg class="a" style="left:932.5px;top:884.5px" width="10" height="8"><path d="M1.5 2 L5 5.5 L8.5 2" stroke="#404040" stroke-width="2" fill="none"/></svg>
<div class="a" style="left:959px;top:878px;width:20px;height:20px;border:1px solid #ADADAD;background:linear-gradient(#F0F0F0,#E5E5E5)"></div>
<svg class="a" style="left:960px;top:879px" width="18" height="18"><line x1="7" y1="7" x2="15.5" y2="15.5" stroke="#8A5A10" stroke-width="3.2" stroke-linecap="round"/><line x1="7" y1="7" x2="15.5" y2="15.5" stroke="#F0B030" stroke-width="1.8" stroke-linecap="round"/><path d="M1 1 L7 1 A6 6 0 0 1 1 7Z" fill="#fff"/><circle cx="5" cy="5" r="5" fill="url(#gBall)"/></svg>
<div class="a" style="left:167px;top:922px;width:832px;height:27px;border:1px solid #ADADAD;background:linear-gradient(#F0F0F0,#E5E5E5)"></div>
<div class="t" style="left:567px;top:928.2px;font-size:12px;color:#000;font-weight:normal;">Apply</div>
<div class="a" style="left:675px;top:347px;width:329px;height:150px;background:#F0F0F0"></div>
<div class="a" style="left:677px;top:363px;width:322px;height:134px;border-left:1px solid #DCDCDC;border-top:1px solid #DCDCDC;border-right:1px solid #DCDCDC"></div>
<div class="t" style="left:683px;top:355px;padding:0 3px 0 2px;background:#F0F0F0">Message Notification:</div>
<div class="a" style="left:675px;top:496px;width:325px;height:0px;"></div>
<div class="t" style="left:691px;top:378.2px;font-size:12px;color:#000;font-weight:normal;">Email Format:</div>
<div class="t" style="left:691px;top:410.2px;font-size:12px;color:#000;font-weight:normal;">Email:</div>
<div class="t" style="left:691px;top:442.2px;font-size:12px;color:#000;font-weight:normal;">Cell Number:</div>
<div class="t" style="left:691px;top:474.2px;font-size:12px;color:#000;font-weight:normal;">Cell Provider:</div>
<div class="a" style="left:803px;top:376px;width:182px;height:23px;border:1px solid #3C7FB1;background:linear-gradient(#EAF6FD,#D9F0FC 50%,#BEE6FD 50%,#A7D9F5)"></div>
<div class="t" style="left:807.5px;top:379.7px;font-size:12px;color:#000;font-weight:normal;">SHORT FORM</div>
<svg class="a" style="left:971.5px;top:383.5px" width="10" height="8"><path d="M1.5 2 L5 5.5 L8.5 2" stroke="#404040" stroke-width="2" fill="none"/></svg>
<div class="a" style="left:803px;top:398px;width:182px;height:32px;border:1px solid #646464;background:#fff;box-shadow:2px 2px 3px rgba(0,0,0,0.35)"></div>
<div class="a" style="left:804px;top:399px;width:180px;height:15px;background:#3399FF"></div>
<div class="t" style="left:806px;top:399.2px;font-size:12px;color:#fff;font-weight:normal;">SHORT FORM</div>
<div class="t" style="left:806px;top:414.2px;font-size:12px;color:#000;font-weight:normal;">LONG FORM</div>
<div class="a" style="left:803px;top:441px;width:182px;height:22px;border:1px solid #ABADB3;background:#fff"></div>
<div class="a" style="left:803px;top:473px;width:182px;height:23px;border:1px solid #ACACAC;background:linear-gradient(#F2F2F2,#E5E5E5)"></div>
<div class="t" style="left:807.5px;top:476.7px;font-size:12px;color:#000;font-weight:normal;">AT&amp;T</div>
<svg class="a" style="left:971.5px;top:480.5px" width="10" height="8"><path d="M1.5 2 L5 5.5 L8.5 2" stroke="#404040" stroke-width="2" fill="none"/></svg>
<svg class="a" style="left:14px;top:57px" width="32" height="32" viewBox="0 0 32 32"><defs><linearGradient id="gSave" x1="0" y1="0" x2="1" y2="1"><stop offset="0" stop-color="#6AA8E0"/><stop offset="1" stop-color="#2A5C9C"/></linearGradient><linearGradient id="gShut" x1="0" y1="0" x2="1" y2="0"><stop offset="0" stop-color="#000"/><stop offset="0.6" stop-color="#222"/><stop offset="1" stop-color="#444"/></linearGradient></defs><rect x="0" y="0" width="32" height="32" rx="1.5" fill="url(#gSave)"/><rect x="10" y="0" width="17" height="12" rx="1" fill="url(#gShut)"/><rect x="21" y="1.5" width="4" height="9" fill="#5A8ECA"/><rect x="6" y="15" width="21" height="14" rx="1" fill="#EEEEF0"/><rect x="5" y="25" width="23" height="4" rx="1" fill="#E81010"/><circle cx="3" cy="29" r="1.3" fill="#111"/><circle cx="29" cy="29" r="1.3" fill="#111"/></svg>
<svg class="a" style="left:67px;top:57px" width="32" height="32" viewBox="0 0 32 32"><rect x="0.5" y="0.5" width="13" height="24" fill="#F4FAFE" stroke="#8ABCE0"/><g fill="#4AA0D8"><rect x="4" y="2.5" width="7" height="1.6"/><rect x="4" y="5.6" width="7" height="1.6"/><rect x="4" y="8.7" width="7" height="1.6"/><rect x="4" y="11.8" width="7" height="1.6"/><rect x="4" y="14.9" width="7" height="1.6"/><rect x="4" y="18" width="7" height="1.6"/><rect x="4" y="21.1" width="7" height="1.6"/></g><g fill="#602020"><rect x="1.8" y="2.5" width="1" height="1.6"/><rect x="1.8" y="8.7" width="1" height="1.6"/><rect x="1.8" y="14.9" width="1" height="1.6"/><rect x="1.8" y="21.1" width="1" height="1.6"/></g><path d="M13 32 C13 24 17 21 23 21 C29 21 32 25 32 32Z" fill="#3CB05A"/><path d="M20 21 L23 26 L26 21Z" fill="#F0F0F0"/><ellipse cx="23" cy="15" rx="5" ry="7" fill="url(#gSkin)"/><path d="M17.5 14 C17 6 29 5 28.5 12 C26 9 21 9 19 16Z" fill="#A88028"/></svg>
<svg class="a" style="left:122px;top:57px" width="34" height="32" viewBox="0 0 34 32"><circle cx="12" cy="12" r="11.5" fill="url(#gBall)" stroke="#1A5CA8" stroke-width="0.8"/><text x="3.5" y="19.5" font-size="20" font-weight="bold" font-style="italic" fill="#fff" font-family="Liberation Sans">@</text><path d="M16 15 C16 10 33 10 33 15 L33 19 L29 19 L29 16 C29 14 20 14 20 16 L20 19 L16 19Z" fill="url(#gRed)"/><path d="M18 19 L31 19 L33 28 L16 28Z" fill="url(#gRed)"/><circle cx="24.5" cy="22.5" r="3.8" fill="#F0F0F0" stroke="#A01010" stroke-width="0.8"/><circle cx="24.5" cy="22.5" r="1.6" fill="#D02020"/></svg>
<svg class="a" style="left:194px;top:57px" width="29" height="32" viewBox="0 0 29 32"><path d="M0.5 3.5 L28.5 3.5 L28.5 26 L23 31.5 L0.5 31.5Z" fill="#fff" stroke="#9A9A9A"/><path d="M23 31.5 L23 26 L28.5 26" fill="#DDD" stroke="#9A9A9A"/><rect x="1" y="4" width="27" height="6" fill="#3A86D8"/><rect x="6" y="1" width="2" height="6" rx="1" fill="#666"/><rect x="21" y="1" width="2" height="6" rx="1" fill="#666"/><text x="5" y="22.5" font-size="13.5" font-weight="bold" fill="#111" font-family="Liberation Sans">24</text><text x="8" y="28.5" font-size="5.5" fill="#333" font-family="Liberation Sans">MAY</text></svg>
<svg class="a" style="left:268px;top:57px" width="26" height="32" viewBox="0 0 26 32"><path d="M1 32 C1 23 6 20 13 20 C20 20 25 23 25 32Z" fill="#3CB050"/><path d="M10 20 L13 25 L16 20Z" fill="#E8F4E8"/><ellipse cx="13" cy="12" rx="6.5" ry="8" fill="url(#gSkin)"/><path d="M6 13 C4 2 22 1 20 12 C19 6 10 5 8 16Z" fill="#D87830"/><path d="M4 14 C4 4 22 4 22 14" stroke="#333" stroke-width="1.3" fill="none"/><rect x="2.5" y="12" width="3" height="6" rx="1" fill="#333"/><path d="M5 17 C6 20 9 20 12 19" stroke="#333" stroke-width="1" fill="none"/></svg>
<svg class="a" style="left:327px;top:57px" width="32" height="32"><use href="#i-acd2"/></svg>
<svg class="a" style="left:385px;top:57px" width="28" height="32" viewBox="0 0 28 32"><g stroke="#E03030" stroke-width="1.2" fill="none"><path d="M7 1.5 L21 1.5"/><path d="M6 4 L22 4"/><path d="M5 6.5 L23 6.5"/></g><path d="M5 17 L23 17 L27 31 L1 31Z" fill="url(#gRed)"/><path d="M1 17 C0 9 28 9 27 17 L27 20 L21 20 L21 16 C21 14 7 14 7 16 L7 20 L1 20Z" fill="url(#gRed)" stroke="#901010" stroke-width="0.6"/><circle cx="14" cy="24" r="6" fill="#E0E0E0" stroke="#888" stroke-width="0.8"/><circle cx="14" cy="24" r="2.8" fill="#D81C1C"/></svg>
<svg class="a" style="left:451px;top:57px" width="28" height="32" viewBox="0 0 28 32"><rect x="0.5" y="1" width="6" height="24" rx="2" fill="url(#gBlue)" stroke="#1A5AA0" stroke-width="0.8"/><rect x="6" y="1" width="20" height="24" rx="1.5" fill="url(#gBlue)" stroke="#1A5AA0" stroke-width="0.8"/><rect x="10" y="4" width="13" height="4" fill="#1A4A80"/><circle cx="14" cy="10" r="0.9" fill="#30C030"/><circle cx="18" cy="10" r="0.9" fill="#30C030"/><g fill="#fff"><rect x="10.5" y="12.5" width="3" height="2.5"/><rect x="15" y="12.5" width="3" height="2.5"/><rect x="19.5" y="12.5" width="3" height="2.5"/><rect x="10.5" y="16.5" width="3" height="2.5"/><rect x="15" y="16.5" width="3" height="2.5"/><rect x="19.5" y="16.5" width="3" height="2.5"/><rect x="10.5" y="20.5" width="3" height="2.5"/><rect x="15" y="20.5" width="3" height="2.5"/><rect x="19.5" y="20.5" width="3" height="2.5"/></g><rect x="8" y="25" width="17" height="6" fill="#CFE6F8" stroke="#2A7AC8" stroke-width="0.8"/><rect x="10" y="27" width="13" height="1.5" fill="#fff"/></svg>
<svg class="a" style="left:532px;top:57px" width="26" height="32" viewBox="0 0 26 32"><defs><linearGradient id="gDoc" x1="0" y1="0" x2="1" y2="1"><stop offset="0" stop-color="#F4FAFF"/><stop offset="1" stop-color="#BCDCF4"/></linearGradient></defs><path d="M0.5 0.5 L18 0.5 L25.5 8 L25.5 31.5 L0.5 31.5Z" fill="url(#gDoc)" stroke="#5A9AD8"/><path d="M18 0.5 L18 8 L25.5 8" fill="#DDEEFA" stroke="#5A9AD8"/><g fill="#F8FCFF" stroke="#4A8AC8" stroke-width="1"><rect x="4.5" y="11.5" width="17" height="4"/><rect x="4.5" y="17.5" width="17" height="4"/><rect x="4.5" y="23.5" width="17" height="4"/></g></svg>
<svg class="a" style="left:617px;top:57px" width="32" height="32" viewBox="0 0 32 32"><ellipse cx="22.5" cy="7.5" rx="7.5" ry="6" fill="url(#gBall)" stroke="#1A5AA8" stroke-width="0.8"/><path d="M20 12 L19 17 L24 13Z" fill="#2A72C0"/><ellipse cx="22.5" cy="7.5" rx="4.5" ry="3" fill="#9AD0F8"/><circle cx="10" cy="13" r="6" fill="#C8C8C8" stroke="#888" stroke-width="0.8"/><circle cx="11" cy="12" r="1.8" fill="#3A5AA8"/><path d="M3 24 C3 17 17 17 17 24 L15 29 L5 29Z" fill="#B8B8B8" stroke="#808080" stroke-width="0.8"/><circle cx="3.5" cy="22" r="3" fill="#D8D8D8" stroke="#888" stroke-width="0.7"/><circle cx="19" cy="23" r="4" fill="#D0D0D0" stroke="#777" stroke-width="0.7"/><circle cx="19" cy="23" r="1.5" fill="#444"/><rect x="6" y="28" width="4" height="3" fill="#999"/></svg>
<svg class="a" style="left:698px;top:57px" width="26" height="32" viewBox="0 0 26 32"><rect x="8.5" y="0.5" width="17" height="30" fill="#E8EEE8" stroke="#A0A8A8"/><rect x="9" y="1" width="16" height="4" fill="#3A92D0"/><g stroke="#A8B8B8" stroke-width="0.8"><line x1="14" y1="6" x2="14" y2="30"/><line x1="19" y1="6" x2="19" y2="30"/><line x1="9" y1="10" x2="25" y2="10"/><line x1="9" y1="15" x2="25" y2="15"/><line x1="9" y1="20" x2="25" y2="20"/><line x1="9" y1="25" x2="25" y2="25"/></g><rect x="0.5" y="6" width="11" height="19" fill="url(#gBlue)"/><path d="M3 15 L12 15 L12 11.5 L18 17.5 L12 23.5 L12 20 L3 20Z" fill="#30B848" stroke="#1A7A2A" stroke-width="0.6"/></svg>
<svg class="a" style="left:11.5px;top:8px" width="15" height="13"><use href="#wicon"/></svg>
<svg class="a" style="left:0;top:0" width="1009" height="958" viewBox="0 0 1009 958">
<g fill="none" stroke-linejoin="round" stroke-linecap="round">
<path stroke="#8A0A0A" stroke-width="1.4" d="M125 51.5 L155 51.5 L162.5 57.5 L176 61 L181 67 L181.5 85 L177.5 100 L169.5 105.5 L153.5 110.5 L118 110.5 L107 103 L106.5 83.5 L110 70 L122 53.5 L126 51.5"/>
<path stroke="#B01818" stroke-width="1" d="M128 53.5 L154 53.5 L161 59.5 L174 63.5 L179.5 69 L179.5 86 L175 100 L165 107.5 L150 109 L120 108.5 L109 101 L108.5 84 L112 71 L124 55"/>
<path stroke="#C82020" stroke-width="1.3" d="M82 351.5 L90.5 355 L108.5 359 L110 366 L105 374.5 L97.5 375.7 L40.7 375.7 L15.7 373.3 L15 366 L19.3 360.2 L25 353.7 L56 353.3 L85 354.3"/>
<path stroke="#B82020" stroke-width="1.3" d="M445 371.5 C438 367 432 364 425 363 C400 359 370 354 330 352 C290 351 258 352 246 359 C233 368 230 386 243 398 C270 407 300 409 354 411.6 C380 413.5 400 414 413 414 C440 414 473 413 520 408 C540 405 548 401 551 397 C556 390 556 385 549 382 C540 377 530 374 520 372 C500 368 480 365 427 363.5"/>
<path stroke="#B82020" stroke-width="1.2" d="M810 372 C840 370 880 370 908 374 C916 380 916 392 913 405 C906 420 890 430 876 434 C855 437 825 438 809 434 C795 428 788 416 788 404 C788 390 795 378 810 372 Z"/>
<path stroke="#C82020" stroke-width="1.2" d="M254 571.7 L276.4 575.4 L286.8 582.8 L285.3 593.2 L274.9 602.2 L246.6 608.1 L209.5 612.6 L172.3 611 L158.2 602.2 L156.7 588.8 L164.9 581.4 L202 574.7 L263 573.2"/>
<path stroke="#B01C1C" stroke-width="1.3" d="M674 526 C720 526 760 527 808 527 C860 527 900 526 930 526.5 C945 528 955 532 958 537 C963 545 961 553 954 558.6 C945 561 935 561 923 561 C880 560 840 558 792 557.6 C750 557.6 710 557.6 678 557.6 C665 557 655 556 653.5 552 C652 545 654 538 663 530 C666 527.5 670 526 674 526"/>
</g></svg>
</body></html>
